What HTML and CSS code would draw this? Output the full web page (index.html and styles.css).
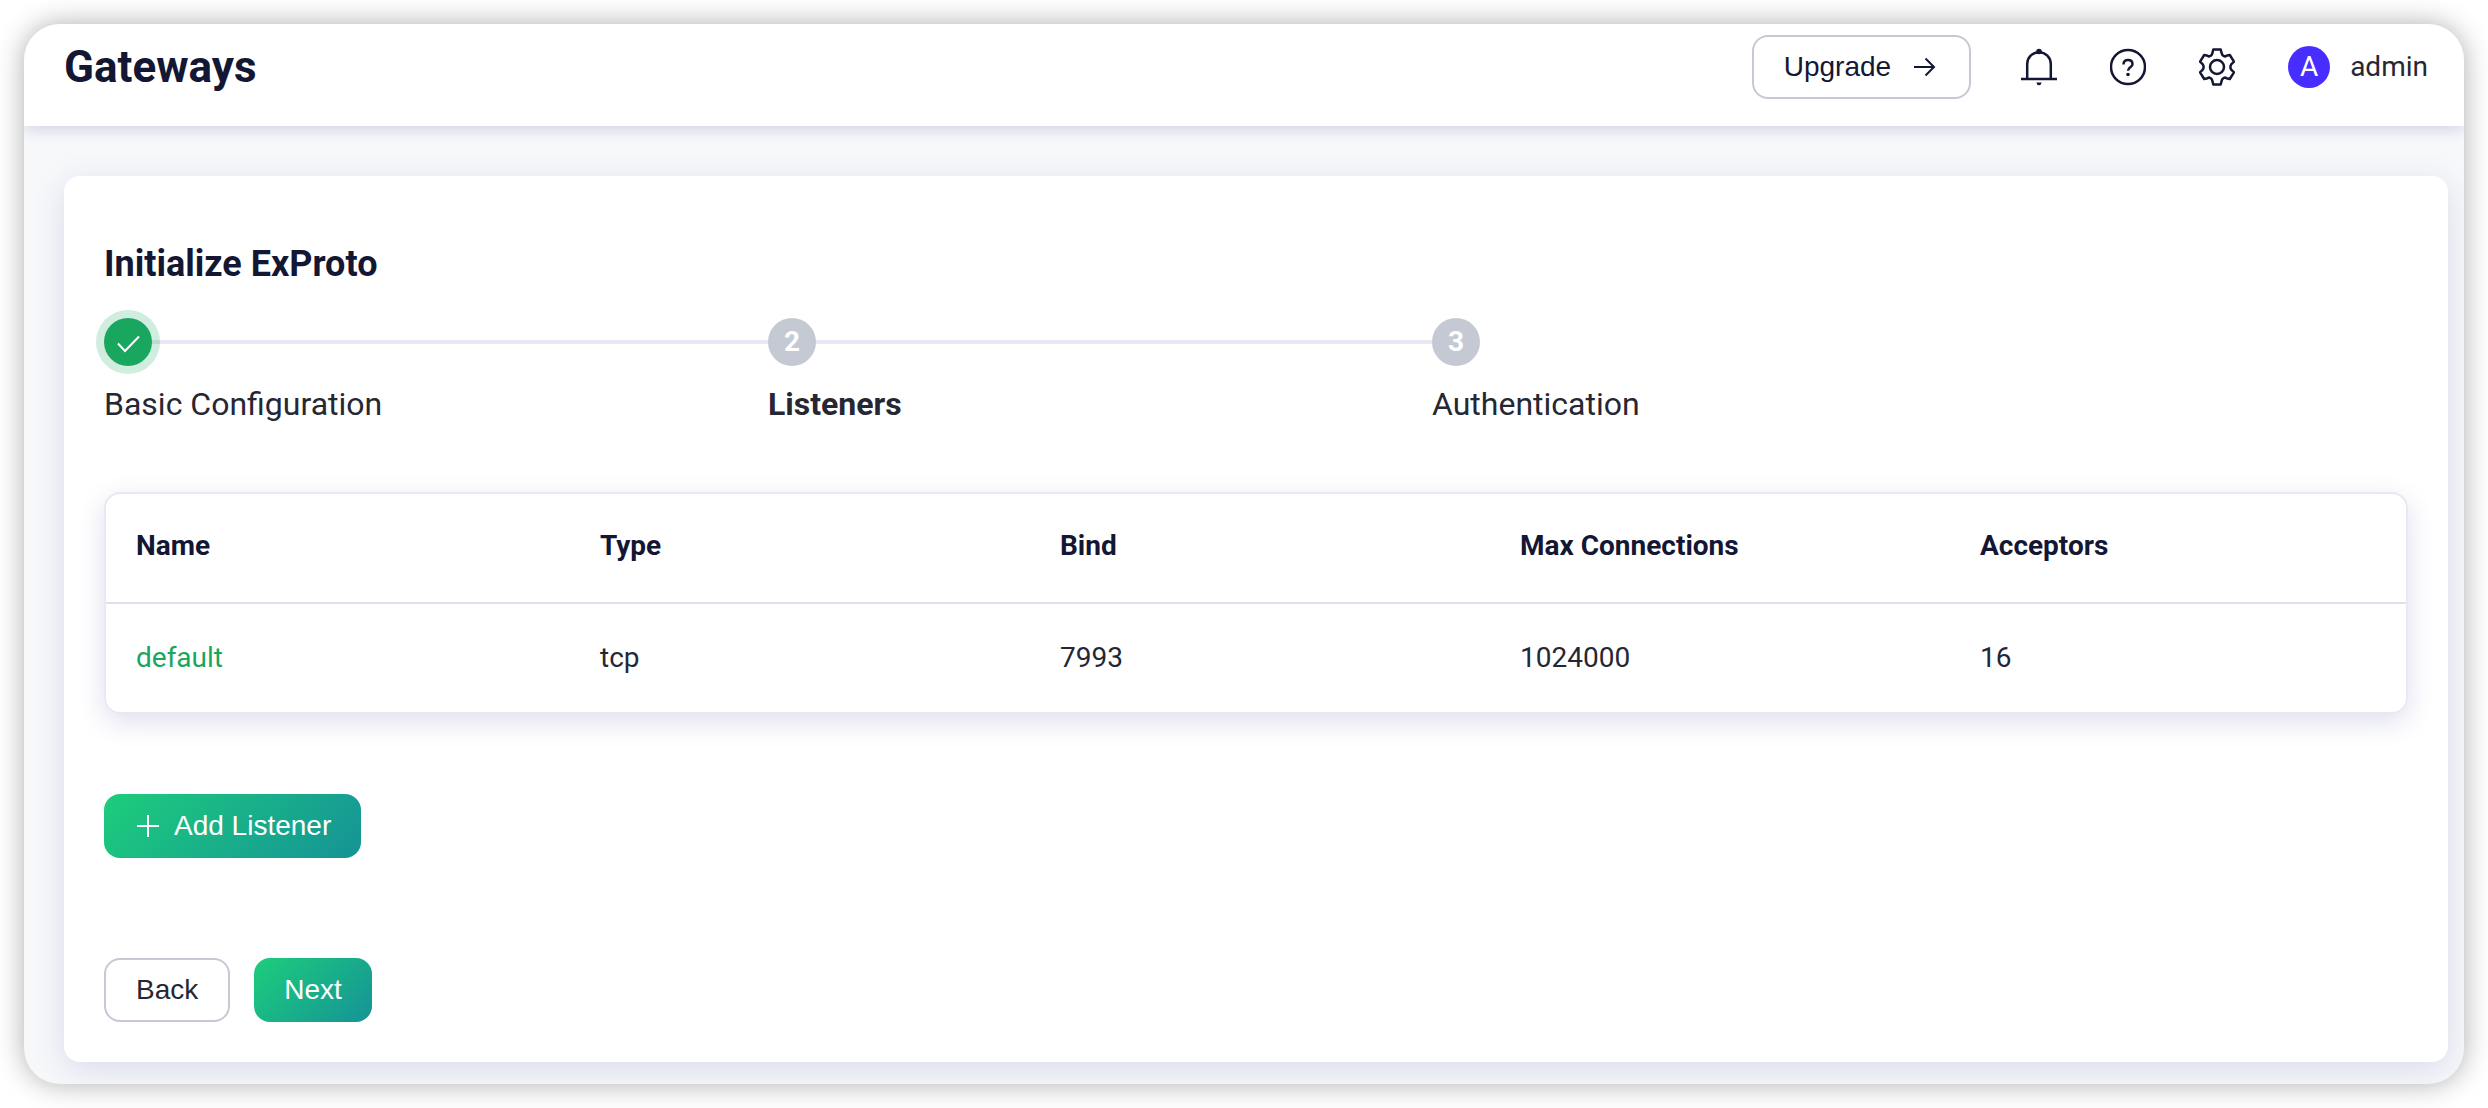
FILE: index.html
```html
<!DOCTYPE html>
<html lang="en">
<head>
  <meta charset="utf-8">
  <title>Gateways</title>
  <link rel="stylesheet" href="styles.css">
</head>
<body>
  <div class="window">
    <header class="topbar">
      <h1 class="page-title">Gateways</h1>
      <div class="actions">
        <button type="button" class="btn btn-upgrade">Upgrade
          <svg class="btn-icon" viewBox="0 0 28 28" aria-hidden="true"><path d="M3 14H23M14.500 5.500L23 14L14.500 22.500"/></svg>
        </button>
        <button type="button" class="icon-btn" aria-label="Notifications">
          <svg viewBox="0 0 36 38"><path d="M6.200 31V16a11.800 11.800 0 0 1 23.600 0V31M0 31H36" /><circle class="solid" cx="18" cy="3.500" r="2.800"/><path class="solid" d="M15.300 34.500H20.700Q20 37.300 18 37.300Q16 37.300 15.300 34.500Z"/></svg>
        </button>
        <button type="button" class="icon-btn" aria-label="Help">
          <svg viewBox="0 0 36 38"><circle cx="18" cy="19" r="17"/><path d="M13.500 16.500C13.500 13.500 15.500 12 18 12S22.500 13.500 22.500 16.200C22.500 19.200 18 19.500 18 22.800"/><circle class="solid" cx="18" cy="26.500" r="1.800"/></svg>
        </button>
        <button type="button" class="icon-btn" aria-label="Settings">
          <svg viewBox="0 0 36 38"><path d="M14.300 1.500H21.700L22.800 5.800Q23.200 7.500 24.800 8Q26.200 8.800 27.300 7.800L30.800 7L35 13.700L32.200 16.300Q30.600 19 32.200 21.700L35 24.300L30.800 31L27.300 30.200Q26.200 29.200 24.800 30Q23.200 30.500 22.800 32.200L21.700 36.500H14.300L13.200 32.200Q12.800 30.500 11.200 30Q9.800 29.200 8.700 30.200L5.200 31L1 24.300L3.800 21.700Q5.400 19 3.800 16.300L1 13.700L5.200 7L8.700 7.800Q9.800 8.800 11.200 8Q12.800 7.500 13.200 5.800Z"/><circle cx="18" cy="19" r="7"/></svg>
        </button>
        <a class="user" href="#"><span class="avatar">A</span>admin</a>
      </div>
    </header>
    <main class="content">
      <section class="card">
        <h2 class="card-title">Initialize ExProto</h2>
        <ol class="steps">
          <li class="step step-done">
            <span class="marker"><svg viewBox="0 0 24 24" aria-label="Done"><path d="M2 13.500L9 21L23 6.500"/></svg></span>
            <span class="step-label">Basic Configuration</span>
          </li>
          <li class="step step-current">
            <span class="marker">2</span>
            <span class="step-label">Listeners</span>
          </li>
          <li class="step">
            <span class="marker">3</span>
            <span class="step-label">Authentication</span>
          </li>
        </ol>
        <div class="table-box">
          <table class="listeners">
            <thead>
              <tr><th>Name</th><th>Type</th><th>Bind</th><th>Max Connections</th><th>Acceptors</th></tr>
            </thead>
            <tbody>
              <tr><td><a href="#">default</a></td><td>tcp</td><td>7993</td><td>1024000</td><td>16</td></tr>
            </tbody>
          </table>
        </div>
        <button type="button" class="btn btn-primary btn-add">
          <svg class="btn-icon" viewBox="0 0 28 28" aria-hidden="true"><path d="M14 3V25M3 14H25"/></svg>Add Listener
        </button>
        <div class="footer">
          <button type="button" class="btn">Back</button>
          <button type="button" class="btn btn-primary">Next</button>
        </div>
      </section>
    </main>
  </div>
</body>
</html>
```
FILE: styles.css
```css
* { box-sizing: border-box; }

body {
  margin: 0;
  padding: 24px;
  background: #fff;
  color: #262733;
  font: 28px/36px Roboto, "Liberation Sans", sans-serif;
}

.window {
  overflow: hidden;
  border-radius: 36px;
  background: #f7f8fa;
  box-shadow: 0 0 28px rgba(0, 0, 0, 0.32);
}

.topbar {
  position: relative;
  display: flex;
  align-items: center;
  justify-content: space-between;
  padding: 11px 36px 27px 40px;
  background: #fff;
  box-shadow: 0 2px 16px #c9cde3;
}

.page-title {
  margin: 0;
  color: #141733;
  font-size: 44px;
  line-height: 52px;
}

.actions { display: flex; align-items: center; }

.btn {
  display: inline-flex;
  align-items: center;
  height: 64px;
  padding: 0 30px;
  border: 2px solid #c5c9d4;
  border-radius: 16px;
  background: #fff;
  color: #262733;
  font: 28px/36px "Liberation Sans", Arial, sans-serif;
}

.btn-primary {
  border: 0;
  background: linear-gradient(135deg, #1dcd7b, #159397);
  color: #fff;
}

.btn-upgrade { gap: 20px; margin-right: 50px; color: #141733; }

svg {
  display: block;
  fill: none;
  stroke: currentColor;
  stroke-width: 2;
}

.btn-icon { width: 28px; height: 28px; }

.icon-btn {
  margin: 0 53px 0 0;
  padding: 0;
  border: 0;
  background: none;
  color: #141733;
}

.icon-btn svg { width: 36px; height: 38px; stroke-width: 2.500; stroke-linejoin: round; }
.icon-btn .solid { fill: currentColor; stroke: none; }

.user {
  display: flex;
  align-items: center;
  gap: 20px;
  color: #262733;
  text-decoration: none;
}

.avatar {
  width: 42px;
  border-radius: 50%;
  background: #482dff;
  color: #fff;
  line-height: 42px;
  text-align: center;
}

.content { padding: 50px 16px 22px 40px; }

.card {
  padding: 64px 40px 40px;
  border-radius: 16px;
  background: #fff;
  box-shadow: 0 8px 32px #d9daeb;
}

.card-title {
  margin: 0;
  color: #141733;
  font-size: 36px;
  line-height: 48px;
}

.steps {
  display: grid;
  grid-template-columns: repeat(3, 1fr);
  max-width: 1992px;
  margin: 30px 0 68px;
  padding: 0;
  list-style: none;
}

.step:not(:last-child) {
  background: linear-gradient(#e8e7f3, #e8e7f3) 0 22px / 100% 4px no-repeat;
}

.marker {
  display: flex;
  align-items: center;
  justify-content: center;
  width: 48px;
  height: 48px;
  border-radius: 50%;
  background: #c5c9d3;
  color: #fff;
  font-weight: 700;
}

.marker svg { width: 24px; height: 24px; }

.step-done .marker {
  background: #19a65f;
  box-shadow: 0 0 0 8px rgba(25, 166, 95, 0.2);
}

.step-label {
  display: block;
  margin-top: 18px;
  font-size: 32px;
  line-height: 40px;
}

.step-current .step-label { font-weight: 700; }

.table-box {
  border: 2px solid #e8e7f3;
  border-radius: 16px;
  box-shadow: 0 8px 28px #dedfee;
}

.listeners {
  width: 100%;
  table-layout: fixed;
  border-spacing: 0;
}

th, td {
  height: 108px;
  padding: 0 0 0 34px;
  text-align: left;
}

th:first-child, td:first-child { padding-left: 30px; }

th {
  height: 110px;
  padding-bottom: 4px;
  border-bottom: 2px solid #dcdfec;
  color: #141733;
}

td a { color: #19a65f; text-decoration: none; }

.btn-add { display: flex; gap: 12px; margin-top: 80px; }

.footer { display: flex; gap: 24px; margin-top: 100px; }
```
